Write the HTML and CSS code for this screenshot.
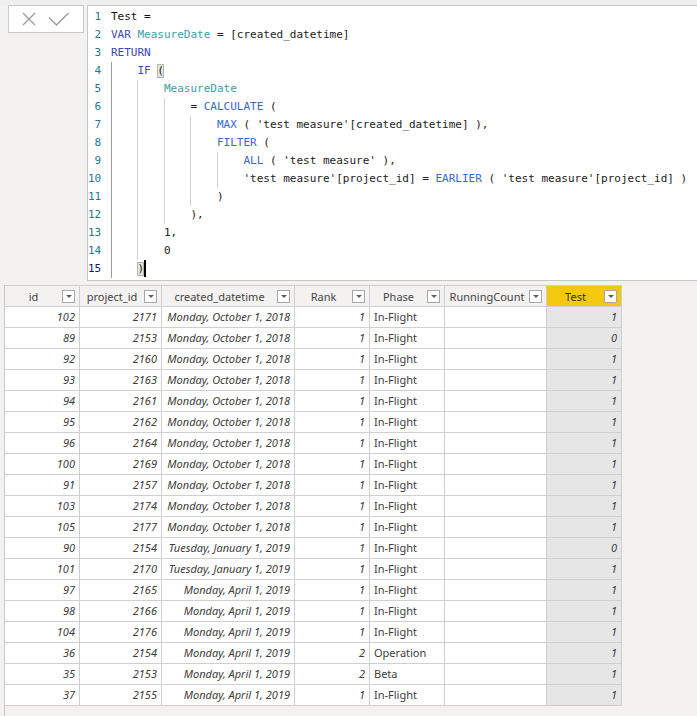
FILE: index.html
```html
<!DOCTYPE html>
<html>
<head>
<meta charset="utf-8">
<link rel="stylesheet" href="styles.css">
</head>
<body>
<div class="formula-bar">
  <div class="actions">
    <svg class="icon-x" width="14" height="14" viewBox="0 0 14 14"><path d="M1 1 L13 13 M13 1 L1 13" stroke="#9b9b9b" stroke-width="1.3" fill="none"/></svg>
    <svg class="icon-check" width="22" height="15" viewBox="0 0 22 15"><path d="M1 5.5 L8.5 13 L20.5 1" stroke="#9b9b9b" stroke-width="1.4" fill="none"/></svg>
  </div>
  <div class="editor">
    <div class="gutter">
      <div class="ln">1</div><div class="ln">2</div><div class="ln">3</div><div class="ln">4</div><div class="ln">5</div><div class="ln">6</div><div class="ln">7</div><div class="ln">8</div><div class="ln">9</div><div class="ln">10</div><div class="ln">11</div><div class="ln">12</div><div class="ln">13</div><div class="ln">14</div><div class="ln cur">15</div>
    </div>
    <div class="code">
<div class="cl"><span class="tx">Test =</span></div>
<div class="cl"><span class="kw">VAR</span> <span class="var">MeasureDate</span> = [created_datetime]</div>
<div class="cl"><span class="kw">RETURN</span></div>
<div class="cl"><span class="g g0"></span><span class="kw">IF</span> <span class="bm">(</span></div>
<div class="cl"><span class="g g0"></span><span class="g"></span><span class="var">MeasureDate</span></div>
<div class="cl"><span class="g g0"></span><span class="g"></span><span class="g"></span>= <span class="fn">CALCULATE</span> (</div>
<div class="cl"><span class="g g0"></span><span class="g"></span><span class="g"></span><span class="g"></span><span class="fn">MAX</span> ( 'test measure'[created_datetime] ),</div>
<div class="cl"><span class="g g0"></span><span class="g"></span><span class="g"></span><span class="g"></span><span class="fn">FILTER</span> (</div>
<div class="cl"><span class="g g0"></span><span class="g"></span><span class="g"></span><span class="g"></span><span class="g"></span><span class="fn">ALL</span> ( 'test measure' ),</div>
<div class="cl"><span class="g g0"></span><span class="g"></span><span class="g"></span><span class="g"></span><span class="g"></span>'test measure'[project_id] = <span class="fn">EARLIER</span> ( 'test measure'[project_id] )</div>
<div class="cl"><span class="g g0"></span><span class="g"></span><span class="g"></span><span class="g"></span>)</div>
<div class="cl"><span class="g g0"></span><span class="g"></span><span class="g"></span>),</div>
<div class="cl"><span class="g g0"></span><span class="g"></span>1,</div>
<div class="cl"><span class="g g0"></span><span class="g"></span>0</div>
<div class="cl"><span class="g g0"></span><span class="bm">)</span><span class="caret"></span></div>
    </div>
  </div>
</div>

<div class="data">
  <div class="grid">
    <div class="hc"><span class="ht">id</span><span class="dd"></span></div>
    <div class="hc"><span class="ht">project_id</span><span class="dd"></span></div>
    <div class="hc"><span class="ht">created_datetime</span><span class="dd"></span></div>
    <div class="hc"><span class="ht">Rank</span><span class="dd"></span></div>
    <div class="hc"><span class="ht">Phase</span><span class="dd"></span></div>
    <div class="hc"><span class="ht">RunningCount</span><span class="dd"></span></div>
    <div class="hc sel"><span class="ht">Test</span><span class="dd"></span></div>

    <div class="c n">102</div><div class="c n">2171</div><div class="c n">Monday, October 1, 2018</div><div class="c n">1</div><div class="c t">In-Flight</div><div class="c"></div><div class="c n m">1</div>
    <div class="c n">89</div><div class="c n">2153</div><div class="c n">Monday, October 1, 2018</div><div class="c n">1</div><div class="c t">In-Flight</div><div class="c"></div><div class="c n m">0</div>
    <div class="c n">92</div><div class="c n">2160</div><div class="c n">Monday, October 1, 2018</div><div class="c n">1</div><div class="c t">In-Flight</div><div class="c"></div><div class="c n m">1</div>
    <div class="c n">93</div><div class="c n">2163</div><div class="c n">Monday, October 1, 2018</div><div class="c n">1</div><div class="c t">In-Flight</div><div class="c"></div><div class="c n m">1</div>
    <div class="c n">94</div><div class="c n">2161</div><div class="c n">Monday, October 1, 2018</div><div class="c n">1</div><div class="c t">In-Flight</div><div class="c"></div><div class="c n m">1</div>
    <div class="c n">95</div><div class="c n">2162</div><div class="c n">Monday, October 1, 2018</div><div class="c n">1</div><div class="c t">In-Flight</div><div class="c"></div><div class="c n m">1</div>
    <div class="c n">96</div><div class="c n">2164</div><div class="c n">Monday, October 1, 2018</div><div class="c n">1</div><div class="c t">In-Flight</div><div class="c"></div><div class="c n m">1</div>
    <div class="c n">100</div><div class="c n">2169</div><div class="c n">Monday, October 1, 2018</div><div class="c n">1</div><div class="c t">In-Flight</div><div class="c"></div><div class="c n m">1</div>
    <div class="c n">91</div><div class="c n">2157</div><div class="c n">Monday, October 1, 2018</div><div class="c n">1</div><div class="c t">In-Flight</div><div class="c"></div><div class="c n m">1</div>
    <div class="c n">103</div><div class="c n">2174</div><div class="c n">Monday, October 1, 2018</div><div class="c n">1</div><div class="c t">In-Flight</div><div class="c"></div><div class="c n m">1</div>
    <div class="c n">105</div><div class="c n">2177</div><div class="c n">Monday, October 1, 2018</div><div class="c n">1</div><div class="c t">In-Flight</div><div class="c"></div><div class="c n m">1</div>
    <div class="c n">90</div><div class="c n">2154</div><div class="c n">Tuesday, January 1, 2019</div><div class="c n">1</div><div class="c t">In-Flight</div><div class="c"></div><div class="c n m">0</div>
    <div class="c n">101</div><div class="c n">2170</div><div class="c n">Tuesday, January 1, 2019</div><div class="c n">1</div><div class="c t">In-Flight</div><div class="c"></div><div class="c n m">1</div>
    <div class="c n">97</div><div class="c n">2165</div><div class="c n">Monday, April 1, 2019</div><div class="c n">1</div><div class="c t">In-Flight</div><div class="c"></div><div class="c n m">1</div>
    <div class="c n">98</div><div class="c n">2166</div><div class="c n">Monday, April 1, 2019</div><div class="c n">1</div><div class="c t">In-Flight</div><div class="c"></div><div class="c n m">1</div>
    <div class="c n">104</div><div class="c n">2176</div><div class="c n">Monday, April 1, 2019</div><div class="c n">1</div><div class="c t">In-Flight</div><div class="c"></div><div class="c n m">1</div>
    <div class="c n">36</div><div class="c n">2154</div><div class="c n">Monday, April 1, 2019</div><div class="c n">2</div><div class="c t">Operation</div><div class="c"></div><div class="c n m">1</div>
    <div class="c n">35</div><div class="c n">2153</div><div class="c n">Monday, April 1, 2019</div><div class="c n">2</div><div class="c t">Beta</div><div class="c"></div><div class="c n m">1</div>
    <div class="c n">37</div><div class="c n">2155</div><div class="c n">Monday, April 1, 2019</div><div class="c n">1</div><div class="c t">In-Flight</div><div class="c"></div><div class="c n m">1</div>
  </div>
</div>
</body>
</html>
```

FILE: styles.css
```css
html, body {
  margin: 0;
  padding: 0;
}
body {
  background: #f3f2f1;
  font-family: "Noto Sans", "Liberation Sans", sans-serif;
  overflow: hidden;
  height: 716px;
}
.formula-bar {
  display: flex;
  align-items: flex-start;
  padding-top: 5px;
  background: linear-gradient(#efefef, #efefef) top / 100% 5px no-repeat;
}
.actions {
  box-sizing: border-box;
  margin-left: 8px;
  width: 76px;
  height: 28px;
  background: #fff;
  border: 1px solid #c8c8c8;
  display: flex;
  align-items: flex-start;
}
.icon-x {
  display: block;
  margin-left: 13px;
  margin-top: 6px;
}
.icon-check {
  display: block;
  margin-left: 12px;
  margin-top: 6px;
}
.editor {
  box-sizing: border-box;
  flex: 1;
  margin-left: 3px;
  height: 276px;
  background: #fff;
  border: 1px solid #c8c8c8;
  border-right: none;
  display: flex;
  padding-top: 2px;
  font-family: "DejaVu Sans Mono", "Liberation Mono", monospace;
  font-size: 11px;
}
.gutter {
  width: 23px;
  box-sizing: border-box;
  padding-right: 10px;
  text-align: right;
  color: #237893;
}
.ln {
  height: 18px;
  line-height: 18px;
}
.ln.cur {
  color: #0b216f;
}
.code {
  color: #222;
}
.cl {
  height: 18px;
  line-height: 18px;
  white-space: pre;
}
.g {
  display: inline-block;
  width: 4ch;
  height: 18px;
  vertical-align: top;
  background: linear-gradient(#d3d3d3, #d3d3d3) left top / 1px 100% no-repeat;
}
.g.g0 {
  background-image: linear-gradient(#9a9a9a, #9a9a9a);
}
.kw {
  color: #3b47b8;
}
.fn {
  color: #3767cc;
}
.var {
  color: #37a3a3;
}
.tx {
  color: #111;
}
.bm {
  display: inline-block;
  height: 14px;
  line-height: 14px;
  margin-top: 2px;
  vertical-align: top;
  background: #e2e7dc;
  box-shadow: inset 0 0 0 1px #b5b5b5;
}
.caret {
  display: inline-block;
  width: 2px;
  height: 17px;
  margin-top: 0;
  vertical-align: top;
  background: #000;
}
.data {
  margin-top: 4px;
  margin-left: 4px;
  border-left: 1px solid #c8c8c8;
  height: 431px;
}
.grid {
  display: grid;
  grid-template-columns: 75px 82px 133px 75px 75px 102px 75px;
  width: max-content;
  font-size: 11px;
  color: #3c3c3c;
}
.hc {
  box-sizing: border-box;
  height: 22px;
  border-top: 1px solid #cfcfcf;
  border-right: 1px solid #cfcfcf;
  border-bottom: 1px solid #cfcfcf;
  display: flex;
  align-items: center;
  background: #f3f2f1;
  color: #444;
  font-size: 11px;
}
.hc.sel {
  background: #f2c811;
  color: #333;
}
.ht {
  flex: 1;
  text-align: center;
  white-space: nowrap;
}
.dd {
  box-sizing: border-box;
  width: 13px;
  height: 13px;
  margin-right: 4px;
  background: #fff;
  border: 1px solid #a8a8a8;
  position: relative;
  flex: none;
}
.dd::after {
  content: "";
  position: absolute;
  left: 3px;
  top: 4px;
  border-left: 3px solid transparent;
  border-right: 3px solid transparent;
  border-top: 3px solid #606060;
}
.c {
  box-sizing: border-box;
  height: 21px;
  line-height: 20px;
  border-right: 1px solid #cfcfcf;
  border-bottom: 1px solid #cfcfcf;
  background: #fff;
  padding: 0 4px;
  white-space: nowrap;
  overflow: hidden;
}
.c.n {
  text-align: right;
  font-style: italic;
}
.c.t {
  text-align: left;
}
.c.m {
  background: #e6e6e6;
}
```
